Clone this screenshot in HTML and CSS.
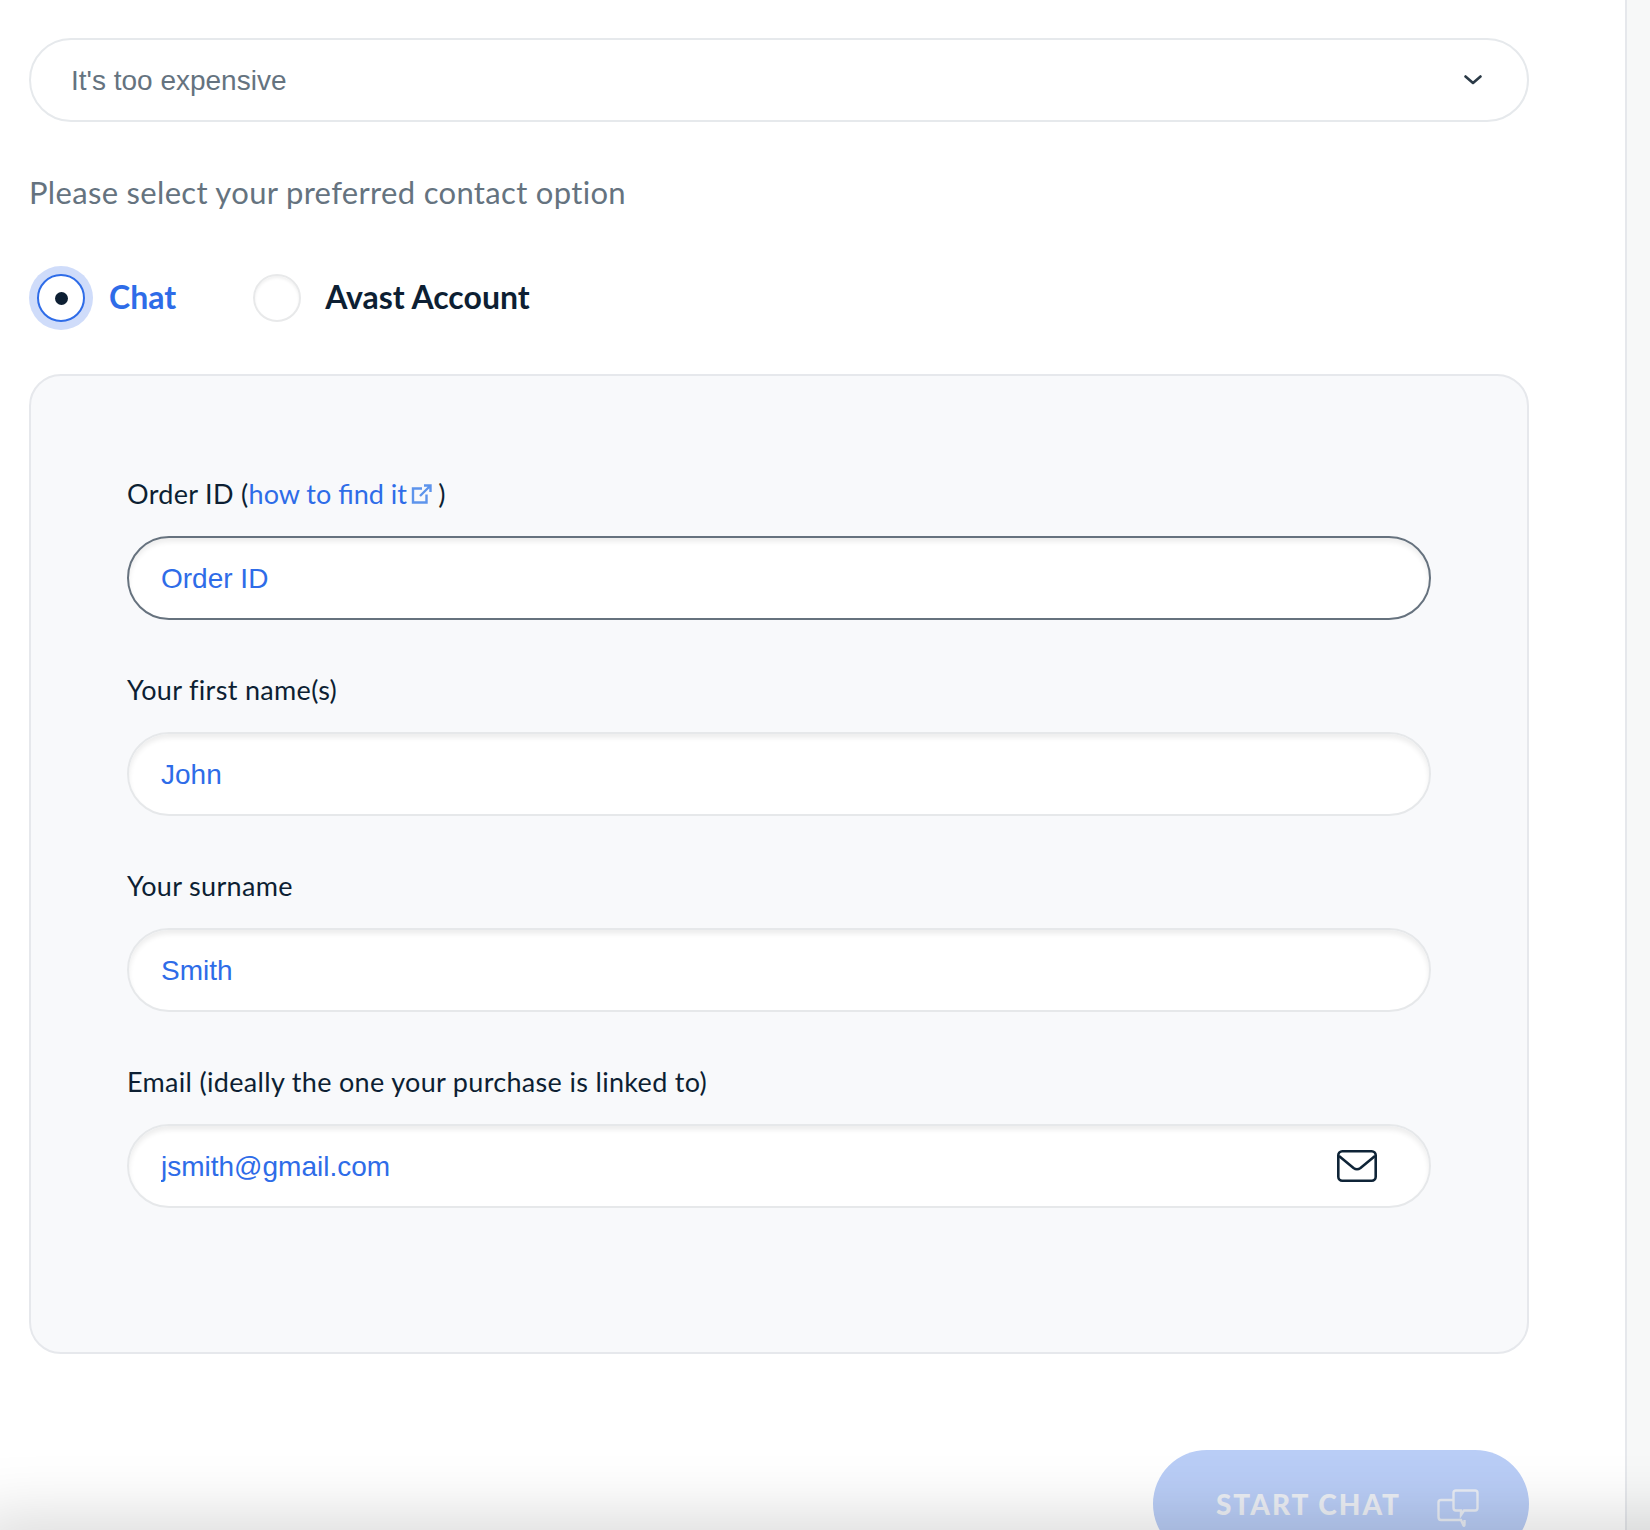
FILE: index.html
```html
<!DOCTYPE html>
<html lang="en">
<head>
    <meta charset="UTF-8">
    <title>Contact</title>
    <link rel="stylesheet" href="styles.css">
</head>
<body>

<div class="page">
    <div class="main">
        <div class="select-box">
            <span>It's too expensive</span>
            <svg class="chevron" width="18" height="10" viewBox="0 0 18 10"><path d="M1.5 1.5 L9 8 L16.5 1.5" fill="none" stroke="#2b3a47" stroke-width="2.6" stroke-linecap="round" stroke-linejoin="round"/></svg>
        </div>

        <p class="question">Please select your preferred contact option</p>

        <div class="radio-row">
            <label class="radio-item active">
                <span class="radio-halo"><span class="radio"><span class="radio-dot"></span></span></span>
                <span class="radio-text">Chat</span>
            </label>
            <label class="radio-item">
                <span class="radio"></span>
                <span class="radio-text">Avast Account</span>
            </label>
        </div>

        <div class="panel">
            <div class="field">
                <label>Order ID (<a href="#">how to find it<svg class="ext-icon" width="21" height="21" viewBox="0 0 21 21"><path d="M11 4.5 H2 V18.5 H15.5 V10.5 M9 12 L19 2 M13 1.5 H19.5 V8" fill="none" stroke="#5d94ec" stroke-width="2.4"/></svg></a> )</label>
                <input class="focused" type="text" value="Order ID">
            </div>
            <div class="field">
                <label>Your first name(s)</label>
                <input type="text" value="John">
            </div>
            <div class="field">
                <label>Your surname</label>
                <input type="text" value="Smith">
            </div>
            <div class="field">
                <label>Email (ideally the one your purchase is linked to)</label>
                <div class="input-wrap">
                    <input type="text" value="jsmith@gmail.com">
                    <svg class="mail-icon" width="40" height="32" viewBox="0 0 40 32"><rect x="1.3" y="1.3" width="37.4" height="29.4" rx="4" fill="none" stroke="#0f2437" stroke-width="2.6"/><path d="M2 6 L16.5 18 Q20 20.5 23.5 18 L38 6" fill="none" stroke="#0f2437" stroke-width="2.6"/></svg>
                </div>
            </div>
        </div>

        <div class="actions">
            <button class="start-btn">
                <span>START CHAT</span>
                <svg class="chat-icon" width="42" height="38" viewBox="0 0 42 38"><path d="M17 11 H4 Q1.5 11 1.5 13.5 V28 Q1.5 31 4 31 H24 L26.5 36.5 Q27.5 37.5 27.5 35 V31" fill="none" stroke="#e9edf5" stroke-width="2.4"/><path d="M19 1.5 H38 Q40.5 1.5 40.5 4 V19 Q40.5 21.5 38 21.5 H27 L24 26 V21.5 H19 Q16.5 21.5 16.5 19 V4 Q16.5 1.5 19 1.5 Z" fill="none" stroke="#e9edf5" stroke-width="2.4"/></svg>
            </button>
        </div>
    </div>
    <div class="side"></div>
    <div class="bottom-fade"></div>
</div>

</body>
</html>
```

FILE: styles.css
```css
body {
    margin: 0;
    background: #fff;
    font-family: "Lato", sans-serif;
    color: #0d1f33;
}
.page {
    display: flex;
    position: relative;
    height: 1530px;
    overflow: hidden;
}
.main {
    box-sizing: border-box;
    flex: 0 0 1627px;
    height: 1530px;
    padding: 38px 0 0 29px;
    border-right: 2px solid #e6e8ec;
}
.side {
    flex: 1;
    background: #f7f8f8;
}
.select-box {
    box-sizing: border-box;
    display: flex;
    justify-content: space-between;
    align-items: center;
    width: 1500px;
    height: 84px;
    padding: 2px 45px 0 40px;
    border: 2px solid #e6e9ec;
    border-radius: 42px;
    font-family: "Liberation Sans", sans-serif;
    font-size: 28px;
    color: #65737f;
}
.chevron {
    margin-top: -2px;
}
.question {
    margin: 48px 0 0;
    font-size: 31px;
    line-height: 44px;
    letter-spacing: 0.32px;
    color: #65737f;
}
.radio-row {
    display: flex;
    align-items: center;
    height: 64px;
    margin-top: 52px;
}
.radio-item {
    display: flex;
    align-items: center;
    gap: 24px;
    font-size: 32px;
    line-height: 60px;
    font-weight: 700;
}
.radio-text {
    margin-bottom: 3px;
}
.radio-item.active {
    gap: 16px;
    margin-right: 77px;
    color: #2e6ce8;
}
.radio-halo {
    display: flex;
    align-items: center;
    justify-content: center;
    width: 64px;
    height: 64px;
    border-radius: 50%;
    background: #cfdcfa;
}
.radio {
    box-sizing: border-box;
    display: flex;
    align-items: center;
    justify-content: center;
    width: 48px;
    height: 48px;
    border: 2px solid #e8e9ea;
    border-radius: 50%;
    background: #fff;
    box-shadow: inset 0 2px 3px rgba(0, 0, 0, 0.06);
}
.active .radio {
    border-color: #2e6ce8;
    box-shadow: none;
}
.radio-dot {
    width: 13px;
    height: 13px;
    border-radius: 50%;
    background: #0d1f33;
}
.panel {
    box-sizing: border-box;
    width: 1500px;
    height: 980px;
    margin-top: 44px;
    padding: 103px 96px 0;
    border: 2px solid #e6e8ec;
    border-radius: 32px;
    background: #f8f9fb;
}
.field {
    margin-bottom: 55px;
}
.field label {
    display: block;
    margin-bottom: 27px;
    font-size: 27px;
    line-height: 30px;
    letter-spacing: 0.32px;
}
.field a {
    letter-spacing: 0;
    color: #2e6ce8;
    text-decoration: none;
}
.ext-icon {
    margin-left: 4px;
    margin-right: -1px;
    vertical-align: -1px;
}
.field input {
    box-sizing: border-box;
    display: block;
    width: 100%;
    height: 84px;
    padding: 2px 32px 0;
    border: 2px solid #e6e8ea;
    border-radius: 42px;
    outline: none;
    background: #fff;
    box-shadow: inset 0 4px 5px rgba(0, 0, 0, 0.07);
    font-family: "Liberation Sans", sans-serif;
    font-size: 28px;
    color: #2e6ce8;
}
.field input.focused {
    border-color: #66727e;
}
.input-wrap {
    position: relative;
}
.mail-icon {
    position: absolute;
    top: 26px;
    right: 54px;
}
.actions {
    display: flex;
    justify-content: flex-end;
    width: 1500px;
    margin-top: 96px;
}
.start-btn {
    display: flex;
    align-items: center;
    justify-content: flex-end;
    gap: 36px;
    box-sizing: border-box;
    width: 376px;
    height: 108px;
    padding: 0 50px 0 0;
    border: none;
    border-radius: 54px;
    background: #b9cdf6;
    font-family: "Lato", sans-serif;
    font-size: 28px;
    font-weight: 900;
    letter-spacing: 2px;
    color: #eceff5;
}
.chat-icon {
    margin-top: 7px;
}
/* sits just below the fold, only its shadow shows */
.bottom-fade {
    position: absolute;
    top: 100%;
    left: -30px;
    right: -100px;
    height: 40px;
    box-shadow: 0 0 70px rgba(0, 0, 0, 0.25);
    pointer-events: none;
}
```
